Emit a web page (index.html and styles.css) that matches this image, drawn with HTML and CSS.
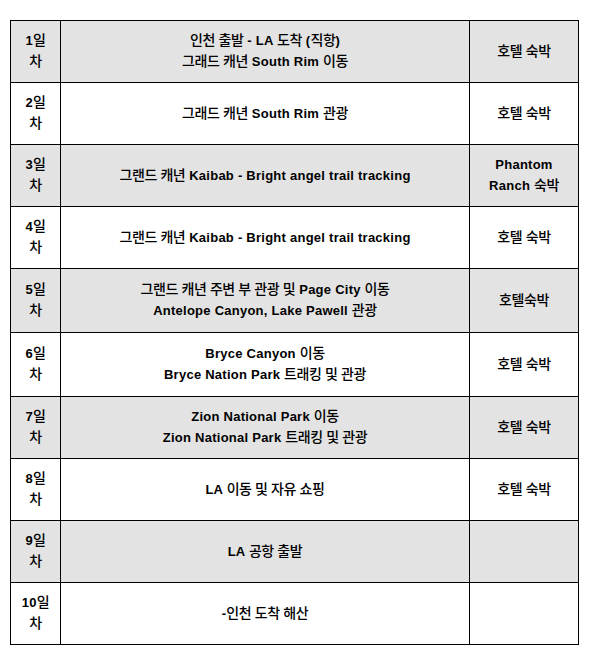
FILE: index.html
```html
<!DOCTYPE html>
<html lang="ko">
<head>
<meta charset="utf-8">
<title>일정표</title>
<link rel="stylesheet" href="styles.css">
</head>
<body>
<table class="plan">
  <colgroup>
    <col class="c-day">
    <col class="c-desc">
    <col class="c-stay">
  </colgroup>
  <tbody>
    <tr class="shade">
      <td class="day">1<span class="ko">일</span><br><span class="ko">차</span></td>
      <td><span class="ko">인천 출발</span> - LA <span class="ko">도착</span> (<span class="ko">직항</span>)<br><span class="ko">그래드 캐년</span> South Rim <span class="ko">이동</span></td>
      <td><span class="ko">호텔 숙박</span></td>
    </tr>
    <tr>
      <td class="day">2<span class="ko">일</span><br><span class="ko">차</span></td>
      <td><span class="ko">그래드 캐년</span> South Rim <span class="ko">관광</span></td>
      <td><span class="ko">호텔 숙박</span></td>
    </tr>
    <tr class="shade">
      <td class="day">3<span class="ko">일</span><br><span class="ko">차</span></td>
      <td><span class="ko">그랜드 캐년</span> Kaibab - Bright angel trail tracking</td>
      <td>Phantom<br>Ranch <span class="ko">숙박</span></td>
    </tr>
    <tr>
      <td class="day">4<span class="ko">일</span><br><span class="ko">차</span></td>
      <td><span class="ko">그랜드 캐년</span> Kaibab - Bright angel trail tracking</td>
      <td><span class="ko">호텔 숙박</span></td>
    </tr>
    <tr class="shade tall">
      <td class="day">5<span class="ko">일</span><br><span class="ko">차</span></td>
      <td><span class="ko">그랜드 캐년 주변 부 관광 및</span> Page City <span class="ko">이동</span><br>Antelope Canyon, Lake Pawell <span class="ko">관광</span></td>
      <td><span class="ko">호텔숙박</span></td>
    </tr>
    <tr class="tall">
      <td class="day">6<span class="ko">일</span><br><span class="ko">차</span></td>
      <td>Bryce Canyon <span class="ko">이동</span><br>Bryce Nation Park <span class="ko">트래킹 및 관광</span></td>
      <td><span class="ko">호텔 숙박</span></td>
    </tr>
    <tr class="shade">
      <td class="day">7<span class="ko">일</span><br><span class="ko">차</span></td>
      <td>Zion National Park <span class="ko">이동</span><br>Zion National Park <span class="ko">트래킹 및 관광</span></td>
      <td><span class="ko">호텔 숙박</span></td>
    </tr>
    <tr>
      <td class="day">8<span class="ko">일</span><br><span class="ko">차</span></td>
      <td>LA <span class="ko">이동 및 자유 쇼핑</span></td>
      <td><span class="ko">호텔 숙박</span></td>
    </tr>
    <tr class="shade">
      <td class="day">9<span class="ko">일</span><br><span class="ko">차</span></td>
      <td>LA <span class="ko">공항 출발</span></td>
      <td></td>
    </tr>
    <tr>
      <td class="day">10<span class="ko">일</span><br><span class="ko">차</span></td>
      <td>-<span class="ko">인천 도착 해산</span></td>
      <td></td>
    </tr>
  </tbody>
</table>
</body>
</html>
```
FILE: styles.css
```css
html, body {
  margin: 0;
  padding: 0;
  background: #ffffff;
}

body {
  padding: 20px 0 0 10px;
  font-family: "Liberation Sans", Arial, "Noto Sans CJK KR", sans-serif;
  font-size: 13px;
  font-weight: bold;
  color: #000000;
}

.plan {
  border-collapse: collapse;
  table-layout: fixed;
  width: 568px;
}

.c-day { width: 50px; }
.c-desc { width: 409px; }
.c-stay { width: 109px; }

.plan td {
  border: 1px solid #000000;
  text-align: center;
  vertical-align: middle;
  line-height: 21px;
  padding: 0 4px 1px;
  height: 61px;
  box-sizing: border-box;
  letter-spacing: 0.25px;
}

.plan tr {
  height: 62px;
}

.plan tr.tall {
  height: 64px;
}

.plan tr.tall td {
  height: 63px;
}

.plan tr.shade td {
  background: #e3e3e3;
}

.ko {
  font-family: "Noto Sans CJK KR", sans-serif;
  font-size: 14px;
  font-weight: 500;
  letter-spacing: -0.4px;
  line-height: 1;
}
```
